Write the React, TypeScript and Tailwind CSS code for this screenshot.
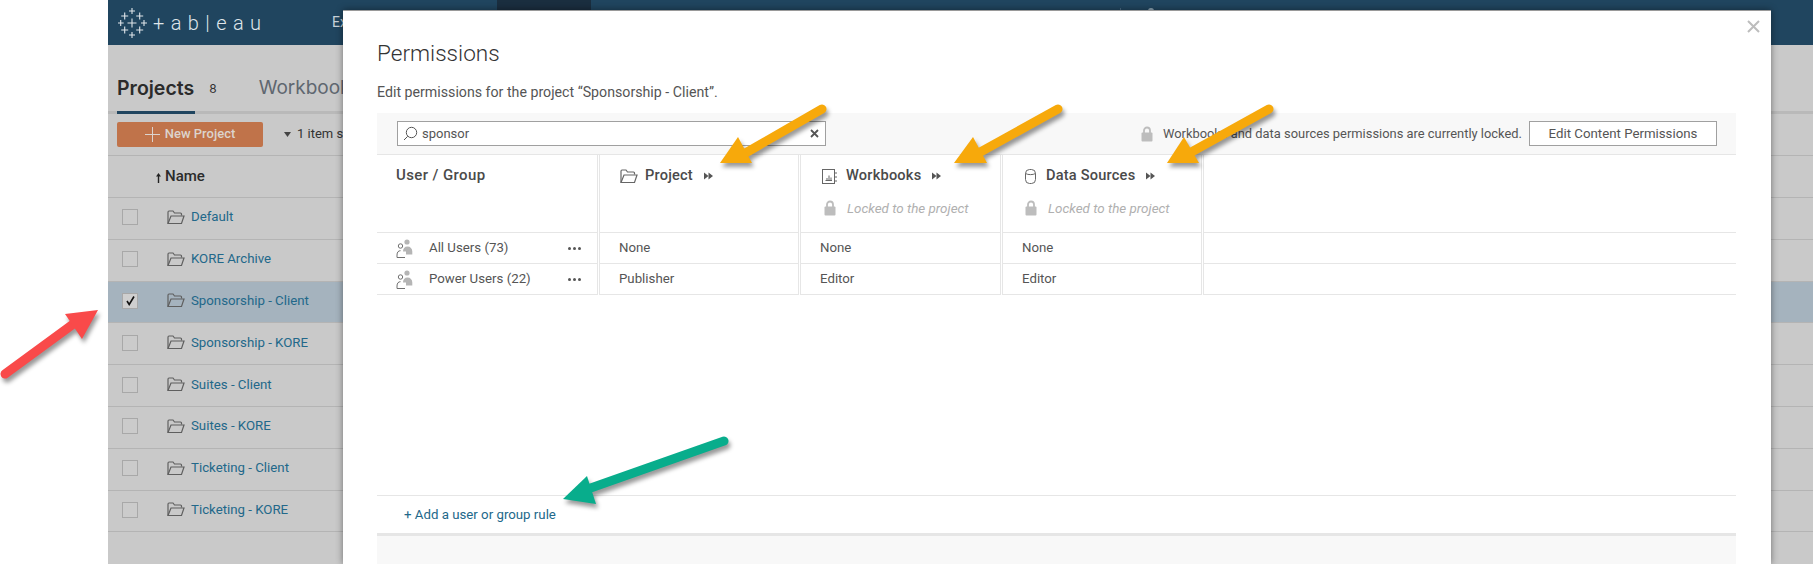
import React from "react";

const font = "font-['Roboto','Liberation_Sans',sans-serif]";

function Logo() {
  const big = [[14, 15, 4.5], [2.7, 15, 3], [26, 15, 3], [14, 3, 3], [14, 27, 3]];
  const small = [[6.7, 8, 3.5], [21.7, 8, 3.5], [6.7, 22, 3.5], [21.7, 22, 3.5]];
  return (
    <svg width="30" height="30" viewBox="0 0 30 30" stroke="#dfe5ea" strokeWidth="1.1" fill="none" className="shrink-0">
      {[...big, ...small].map(([x, y, s], i) => (
        <path key={i} d={`M${x - s} ${y}H${x + s}M${x} ${y - s}V${y + s}`} />
      ))}
    </svg>
  );
}

function Folder({ color = "#5f5f5f" }: { color?: string }) {
  return (
    <svg width="18" height="15" viewBox="0 0 18 15" fill="none" stroke={color} strokeWidth="1.2" className="shrink-0">
      <path d="M1 13.5V2.2C1 1.5 1.4 1 2 1h4l1.5 2h6c.6 0 1 .4 1 1v1.5" />
      <path d="M1 13.5L4 6h13l-2.5 7.5z" />
    </svg>
  );
}

function Lock() {
  return (
    <svg width="12" height="16" viewBox="0 0 12 16" className="shrink-0">
      <path d="M3 7V4.5a3 3 0 0 1 6 0V7" fill="none" stroke="#bdbdbd" strokeWidth="1.8" />
      <rect x="0.5" y="6.5" width="11" height="9" rx="1" fill="#bdbdbd" />
    </svg>
  );
}

function Chevrons() {
  return (
    <svg width="9" height="8" viewBox="0 0 9 8" fill="#555" className="shrink-0">
      <path d="M0 0.5L4.5 4L0 7.5z" />
      <path d="M4.5 0.5L9 4L4.5 7.5z" />
    </svg>
  );
}

function Users() {
  return (
    <svg width="17" height="19" viewBox="0 0 17 19" className="shrink-0">
      <circle cx="11" cy="3" r="2.6" fill="#b5b5b5" />
      <path d="M7 12.5c0-3 1.6-5 4.5-5s4.8 2 4.8 5v3H10v-3z" fill="#b5b5b5" />
      <circle cx="4.5" cy="7" r="2.2" fill="#fff" stroke="#707070" strokeWidth="1" />
      <path d="M9 18.5H1v-2.5c0-3 1.5-4.3 3.5-4.3" fill="#fff" stroke="#707070" strokeWidth="1" />
    </svg>
  );
}

function Dots() {
  return (
    <div className="flex gap-[2px] w-[15px] shrink-0">
      <span className="w-[3px] h-[3px] rounded-full bg-[#555]" />
      <span className="w-[3px] h-[3px] rounded-full bg-[#555]" />
      <span className="w-[3px] h-[3px] rounded-full bg-[#555]" />
    </div>
  );
}

function Row({ name, selected }: { name: string; selected?: boolean }) {
  return (
    <div className={`h-[41.8px] shrink-0 flex items-center border-b border-[#b4b4b4] pl-[14px] pb-[2px] ${selected ? "bg-[#a5b3be]" : ""}`}>
      <div className={`w-4 h-4 border border-[#a8a8a8] flex items-center justify-center ${selected ? "bg-[#cfcfcf]" : "bg-[#cbcbcb]"}`}>
        {selected && (
          <svg width="11" height="11" viewBox="0 0 11 11" fill="none" stroke="#111" strokeWidth="1.6">
            <path d="M2 6l2.2 3.5L9 1.5" />
          </svg>
        )}
      </div>
      <div className="ml-[29px]">
        <Folder />
      </div>
      <span className="ml-[6px] text-[13.25px] text-[#22688a]">{name}</span>
    </div>
  );
}

function HeaderCell({ icon, title, locked, width, ml, lockMl }: { icon: React.ReactNode; title: string; locked?: boolean; width: string; ml: string; lockMl: string }) {
  return (
    <div className={`${width} shrink-0 border-x border-[#e6e6e6] border-b`}>
      <div className={`flex items-center h-[14px] mt-[14px] ${ml}`}>
        {icon}
        <span className="ml-[7px] text-[14.6px] font-medium text-[#4a4a4a] tracking-[0.2px]">{title}</span>
        <span className="ml-[11px]">
          <Chevrons />
        </span>
      </div>
      {locked && (
        <div className={`flex items-center mt-[16px] ${lockMl}`}>
          <div className="mb-[3px]">
            <Lock />
          </div>
          <span className="ml-[11px] text-[13.4px] italic text-[#b0b0b0]">Locked to the project</span>
        </div>
      )}
    </div>
  );
}

function DataRow({ name, p, w, d }: { name: string; p: string; w: string; d: string }) {
  const cell = "shrink-0 flex items-center pl-[19px] border-x border-b border-[#e6e6e6] text-[13.25px] text-[#555]";
  return (
    <div className="flex gap-[1px] h-[31px]">
      <div className="w-[221px] shrink-0 flex items-center border-r border-b border-[#e6e6e6] pl-[19px] text-[13.25px] text-[#555]">
        <Users />
        <span className="ml-[16px] w-[139px]">{name}</span>
        <Dots />
      </div>
      <div className={`${cell} w-[200px]`}>{p}</div>
      <div className={`${cell} w-[201px]`}>{w}</div>
      <div className={`${cell} w-[200px]`}>{d}</div>
      <div className="flex-1 border-l border-b border-[#e6e6e6]" />
    </div>
  );
}

function Arrow({ tail, neck, tip, p1, p2, color }: { tail: number[]; neck: number[]; tip: number[]; p1: number[]; p2: number[]; color: string }) {
  return (
    <g className="drop-shadow-[2px_4px_2px_rgba(0,0,0,0.4)]">
      <line x1={tail[0]} y1={tail[1]} x2={neck[0]} y2={neck[1]} stroke={color} strokeWidth="9" strokeLinecap="round" />
      <polygon points={`${tip.join(",")} ${p1.join(",")} ${p2.join(",")}`} fill={color} />
    </g>
  );
}

export default function App() {
  return (
    <div className={`relative w-[1813px] h-[564px] overflow-hidden bg-white ${font}`}>
      {/* dimmed page */}
      <div className="ml-[108px] h-full bg-[#c9c9c9] flex flex-col">
        <div className="h-[45px] shrink-0 bg-[#20455f] flex items-center">
          <div className="ml-[10px] flex items-center">
            <Logo />
            <span className="ml-[5px] w-[110px] text-[20px] font-light text-[#dfe5ea] tracking-[6.4px] whitespace-nowrap">+ab|eau</span>
          </div>
          <span className="ml-[69px] text-[14px] text-[#c8d2da]">Ex</span>
          <div className="ml-[150px] w-[94px] h-full bg-[#1a2e3f]" />
          <div className="ml-[529px] w-[1px] h-[30px] bg-[#4a6a82]" />
          <div className="ml-[27px] self-start mt-[8px] w-[6px] h-[6px] rounded-full bg-[#8fa5b5]" />
        </div>
        <div className="h-[70px] shrink-0 flex flex-col justify-end pb-[1px]">
          <div className="flex items-center pl-[9px] h-[40px] pb-[5px] font-['Inter',sans-serif]">
            <span className="text-[19.5px] font-semibold text-[#2b2b2b]">Projects</span>
            <span className="ml-[15px] text-[12px] text-[#333]">8</span>
            <span className="ml-[42px] text-[19px] text-[#5f6770]">Workbooks</span>
          </div>
          <div className="h-[3px] bg-[#b9b9b9]">
            <div className="ml-[9px] w-[78px] h-full bg-[#20455f]" />
          </div>
        </div>
        <div className="h-[41px] shrink-0 border-b border-[#b4b4b4] flex items-center pl-[9px] pb-[2px]">
          <div className="w-[146px] h-[25px] bg-[#c0734a] rounded-[2px] flex items-center justify-center text-[13px] font-medium text-[#dcd3cd]">
            <svg width="15" height="15" viewBox="0 0 15 15" stroke="#dcd3cd" strokeWidth="1" className="mr-[5px]">
              <path d="M0 7.5H15M7.5 0V15" />
            </svg>
            New Project
          </div>
          <svg width="7" height="5" viewBox="0 0 7 5" className="ml-[21px]" fill="#444">
            <path d="M0 0h7L3.5 5z" />
          </svg>
          <span className="ml-[6px] text-[13px] text-[#333] whitespace-nowrap">1 item selected</span>
        </div>
        <div className="h-[42px] shrink-0 border-b border-[#b4b4b4] flex items-center pl-[48px]">
          <svg width="5" height="10" viewBox="0 0 5 10" className="mt-[3px]" fill="#222">
            <path d="M2.5 0L5 3.5H3.2V10H1.8V3.5H0z" />
          </svg>
          <span className="ml-[4px] text-[15px] font-medium text-[#2b2b2b]">Name</span>
        </div>
        <Row name="Default" />
        <Row name="KORE Archive" />
        <Row name="Sponsorship - Client" selected />
        <Row name="Sponsorship - KORE" />
        <Row name="Suites - Client" />
        <Row name="Suites - KORE" />
        <Row name="Ticketing - Client" />
        <Row name="Ticketing - KORE" />
      </div>

      {/* modal */}
      <div className="absolute left-[343px] top-[10px] w-[1428px] h-[554px] bg-white border-t border-[#9a9a9a] shadow-[0_0_7px_rgba(0,0,0,0.45)] flex flex-col pl-[34px] pr-[35px]">
        <svg width="13" height="13" viewBox="0 0 13 13" stroke="#bdbdbd" strokeWidth="2" className="absolute right-[11px] top-[9px]">
          <path d="M1 1l11 11M12 1L1 12" />
        </svg>
        <div className="mt-[29px] h-[28px] flex items-center text-[22.6px] font-light text-[#333]">Permissions</div>
        <div className="mt-[17px] h-[16px] flex items-center text-[14.2px] text-[#555]">Edit permissions for the project “Sponsorship - Client”.</div>
        <div className="mt-[12px] h-[42px] shrink-0 bg-[#f8f8f8] border-b border-[#e6e6e6] flex items-center pl-[20px] pr-[19px]">
          <div className="w-[429px] h-[25px] bg-white border border-[#a0a0a0] flex items-center pl-[5px] pr-[6px]">
            <svg width="15" height="15" viewBox="0 0 15 15" fill="none" stroke="#555" strokeWidth="1">
              <circle cx="8.5" cy="6.5" r="5.2" />
              <path d="M4.7 10.3L1 14" />
            </svg>
            <span className="ml-[4px] text-[13px] text-[#555]">sponsor</span>
            <svg width="9" height="9" viewBox="0 0 9 9" stroke="#555" strokeWidth="1.8" className="ml-auto">
              <path d="M1 1l7 7M8 1L1 8" />
            </svg>
          </div>
          <div className="ml-auto">
            <Lock />
          </div>
          <span className="ml-[10px] text-[12.9px] text-[#555] whitespace-nowrap">Workbooks and data sources permissions are currently locked.</span>
          <div className="ml-[7px] w-[188px] h-[25px] bg-white border border-[#a0a0a0] flex items-center justify-center text-[13.25px] text-[#555]">Edit Content Permissions</div>
        </div>
        <div className="flex gap-[1px] h-[78px] shrink-0">
          <div className="w-[221px] shrink-0 border-r border-b border-[#e6e6e6] pl-[19px] pt-[9px] text-[15px] font-medium text-[#4a4a4a] tracking-[0.4px]">User / Group</div>
          <HeaderCell
            width="w-[200px]"
            ml="ml-[20px]"
            lockMl=""
            title="Project"
            icon={<Folder color="#666" />}
          />
          <HeaderCell
            width="w-[201px]"
            ml="ml-[21px]"
            lockMl="ml-[23px]"
            title="Workbooks"
            locked
            icon={
              <svg width="15" height="15" viewBox="0 0 15 15" fill="none" stroke="#666" strokeWidth="1" className="mr-[2px]">
                <rect x="0.5" y="0.5" width="12" height="14" />
                <path d="M3.5 11.5h6.5M5 11V9M7 11V6.5M9 11V8.5" />
                <path d="M14 3v2M14 7v2M14 11v2" />
              </svg>
            }
          />
          <HeaderCell
            width="w-[200px]"
            ml="ml-[22px]"
            lockMl="ml-[22px]"
            title="Data Sources"
            locked
            icon={
              <svg width="11" height="15" viewBox="0 0 11 15" fill="none" stroke="#666" strokeWidth="1" className="mr-[3px]">
                <rect x="0.5" y="0.5" width="10" height="14" rx="4" />
                <path d="M0.5 4.5c2.5 1.5 7.5 1.5 10 0" />
              </svg>
            }
          />
          <div className="flex-1 border-l border-b border-[#e6e6e6]" />
        </div>
        <DataRow name="All Users (73)" p="None" w="None" d="None" />
        <DataRow name="Power Users (22)" p="Publisher" w="Editor" d="Editor" />
        <div className="flex-1 border-b border-[#e6e6e6]" />
        <div className="h-[37px] shrink-0 flex items-center pl-[27px] text-[13.25px] text-[#22688a]">+ Add a user or group rule</div>
        <div className="h-[3px] shrink-0 bg-[#e6e6e6]" />
        <div className="h-[28px] shrink-0 bg-[#f8f8f8]" />
      </div>

      {/* annotation arrows */}
      <svg width="1813" height="564" viewBox="0 0 1813 564" className="absolute inset-0 pointer-events-none">
        <Arrow tail={[822, 109]} neck={[742, 155]} tip={[720, 163]} p1={[738, 137]} p2={[752, 163]} color="#f7a90b" />
        <Arrow tail={[1058, 109]} neck={[975, 155]} tip={[954, 163]} p1={[973, 137]} p2={[987, 163]} color="#f7a90b" />
        <Arrow tail={[1269, 109]} neck={[1186, 155]} tip={[1167, 163]} p1={[1184, 137]} p2={[1199, 163]} color="#f7a90b" />
        <Arrow tail={[5, 374]} neck={[76, 322]} tip={[98, 310]} p1={[65, 314]} p2={[82, 339]} color="#f94a4a" />
        <Arrow tail={[724, 441]} neck={[585, 490]} tip={[563, 499]} p1={[587, 476]} p2={[596, 504]} color="#08ad8c" />
      </svg>
    </div>
  );
}
